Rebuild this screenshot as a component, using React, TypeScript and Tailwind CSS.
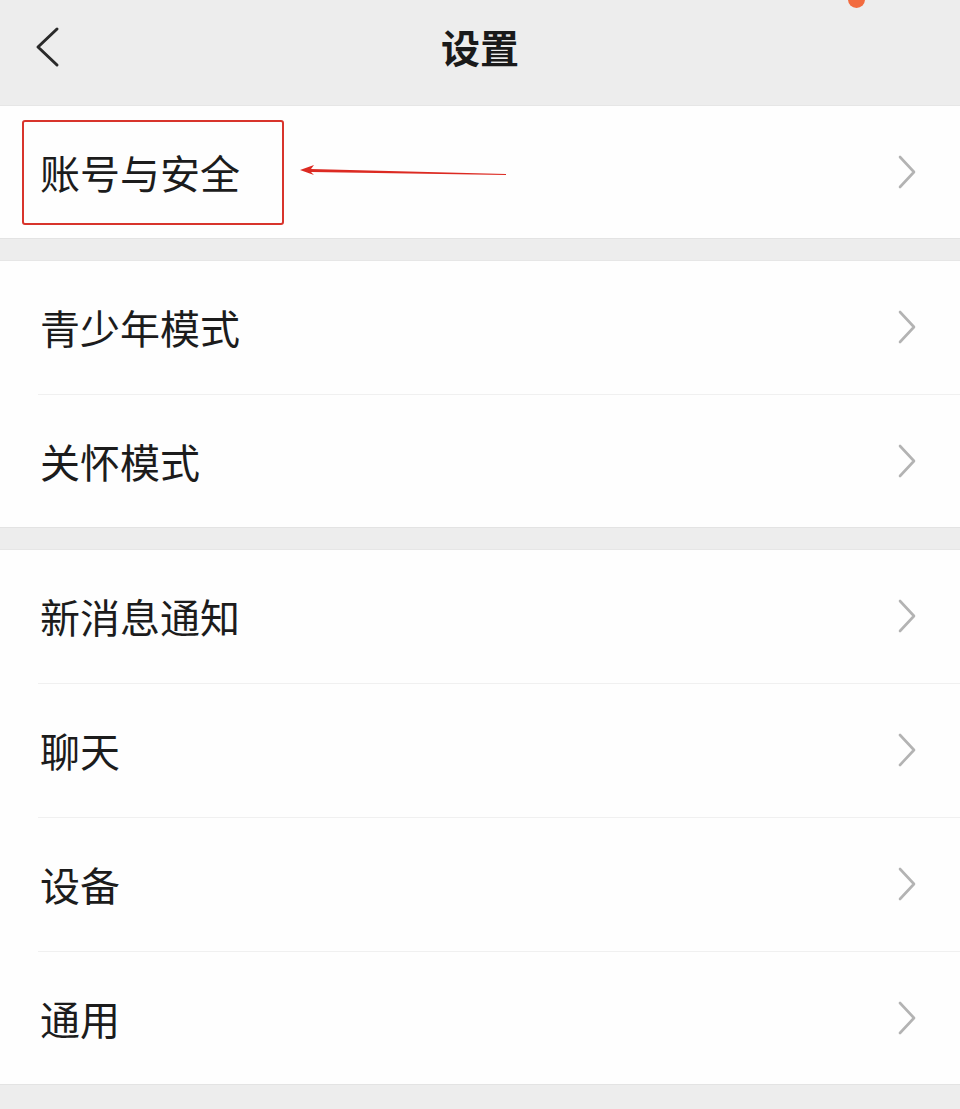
import React from "react";

const sections = [
  ["账号与安全"],
  ["青少年模式", "关怀模式"],
  ["新消息通知", "聊天", "设备", "通用"],
];

function Chevron() {
  return (
    <svg width="20" height="34" viewBox="0 0 20 34" fill="none" className="shrink-0">
      <path d="M3 2 L17 17 L3 32" stroke="#b3b3b3" strokeWidth="2.6" strokeLinecap="round" strokeLinejoin="round" />
    </svg>
  );
}

function Row({ label, first, marked }: { label: string; first: boolean; marked?: boolean }) {
  return (
    <div className="relative h-[134px] flex items-center">
      {!first && <div className="absolute top-0 left-[38px] right-0 h-px bg-[#f0f0f0]" />}
      <div className="flex-1 pl-[40px] text-[40px] leading-none text-[#1c1c1c]">{label}</div>
      <div className="pr-[43px] flex items-center">
        <Chevron />
      </div>
      {marked && (
        <>
          <div className="absolute left-[22px] top-[15px] w-[262px] h-[105px] border-2 border-[#d8342c] rounded-[3px]" />
          <svg className="absolute left-[298px] top-[58px]" width="212" height="16" viewBox="0 0 212 16">
            <polygon points="2,7 16,2 13,6 208,11 208,12 13,9 16,12" fill="#dc2a22" />
          </svg>
        </>
      )}
    </div>
  );
}

export default function App() {
  return (
    <div
      className="w-[960px] h-[1109px] overflow-hidden bg-[#ededed]"
      style={{ fontFamily: '"Noto Sans CJK SC", "Noto Sans", sans-serif' }}
    >
      <div className="relative h-[105px] flex items-center justify-center">
        <div className="absolute left-[34px] top-[26px]">
          <svg width="28" height="42" viewBox="0 0 28 42" fill="none">
            <path d="M23 3 L4 21 L23 39" stroke="#2a2a2a" strokeWidth="3" strokeLinecap="round" strokeLinejoin="round" />
          </svg>
        </div>
        <div className="text-[39px] font-bold text-[#1a1a1a] -mt-[12px]">设置</div>
        <div className="absolute left-[848px] -top-[9px] w-[17px] h-[17px] rounded-full bg-[#f26b3f]" />
      </div>
      <div className="flex flex-col gap-[21px]">
        {sections.map((rows, i) => (
          <div
            key={i}
            className="bg-[#fefefe] shadow-[inset_0_1px_0_#e6e6e6,inset_0_-1px_0_#e3e3e3]"
          >
            {rows.map((label, j) => (
              <Row key={label} label={label} first={j === 0} marked={i === 0} />
            ))}
          </div>
        ))}
      </div>
    </div>
  );
}
